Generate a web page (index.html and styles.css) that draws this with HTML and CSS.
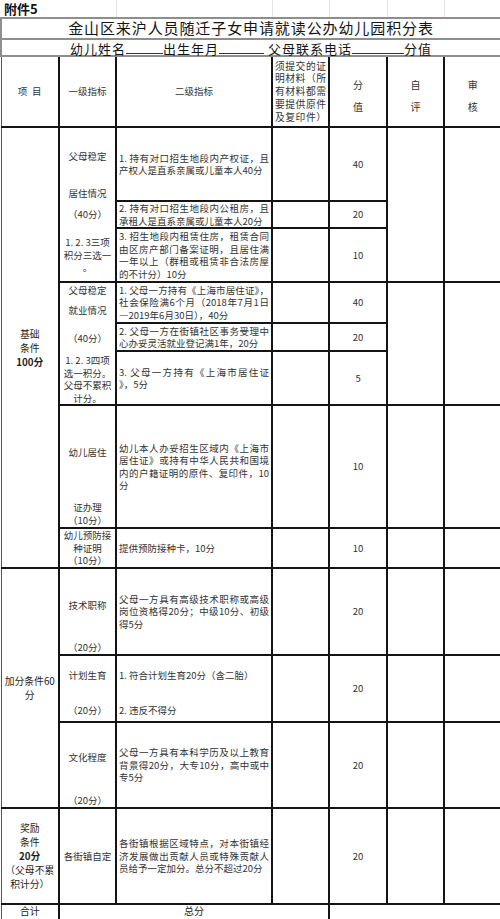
FILE: index.html
```html
<!DOCTYPE html>
<html lang="zh-CN">
<head>
<meta charset="utf-8">
<title>金山区来沪人员随迁子女申请就读公办幼儿园积分表</title>
<link rel="stylesheet" href="styles.css">
</head>
<body>
<table class="sheet">
  <colgroup>
    <col class="c1"><col class="c2"><col class="c3"><col class="c4"><col class="c5"><col class="c6"><col class="c7">
  </colgroup>
  <tr class="r-top">
    <td colspan="2" class="att">附件5</td><td></td><td></td><td></td><td></td><td class="last"></td>
  </tr>
  <tr class="r-title">
    <td colspan="7" class="title">金山区来沪人员随迁子女申请就读公办幼儿园积分表</td>
  </tr>
  <tr class="r-info">
    <td colspan="7" class="info">幼儿姓名<span class="blank b1"></span>出生年月<span class="blank b2"></span> 父母联系电话<span class="blank b3"></span>分值</td>
  </tr>
  <tr class="h71">
    <td class="first">项&ensp;目</td>
    <td>一级指标</td>
    <td>二级指标</td>
    <td class="doc"><div class="j">须提交的证</div><div class="j">明材料（所</div><div class="j">有材料都需</div><div class="j">要提供原件</div><div class="j">及复印件）</div></td>
    <td class="two">分<br>值</td>
    <td class="two">自<br>评</td>
    <td class="two last">审<br>核</td>
  </tr>

  <tr class="h74">
    <td rowspan="8" class="first sec"><div>基础</div><div>条件</div><div class="bold">100分</div></td>
    <td rowspan="3" class="stack pt22">
      <div>父母稳定</div>
      <div class="mt24">居住情况</div>
      <div class="mt8">（40分）</div>
      <div class="mt15">1. 2. 3三项</div>
      <div>积分三选一</div>
      <div>。</div>
    </td>
    <td class="txt"><div class="j">1. 持有对口招生地段内产权证，且</div><div>产权人是直系亲属或儿童本人40分</div></td>
    <td></td>
    <td>40</td>
    <td rowspan="3"></td>
    <td rowspan="3" class="last"></td>
  </tr>
  <tr class="h26">
    <td class="txt"><div class="j">2. 持有对口招生地段内公租房，且</div><div>承租人是直系亲属或儿童本人20分</div></td>
    <td></td>
    <td>20</td>
  </tr>
  <tr class="h54">
    <td class="txt"><div class="j">3. 招生地段内租赁住房，租赁合同</div><div class="j">由区房产部门备案证明，且居住满</div><div class="j">一年以上（群租或租赁非合法房屋</div><div>的不计分）10分</div></td>
    <td></td>
    <td>10</td>
  </tr>

  <tr class="h41">
    <td rowspan="3" class="stack pt1">
      <div>父母稳定</div>
      <div class="mt7">就业情况</div>
      <div class="mt15">（40分）</div>
      <div class="mt9">1. 2. 3四项</div>
      <div>选一积分。</div>
      <div>父母不累积</div>
      <div>计分。</div>
    </td>
    <td class="txt"><div class="j">1. 父母一方持有《上海市居住证》，</div><div class="j">社会保险满6个月（2018年7月1日</div><div>—2019年6月30日），40分</div></td>
    <td></td>
    <td>40</td>
    <td rowspan="3"></td>
    <td rowspan="3" class="last"></td>
  </tr>
  <tr class="h28">
    <td class="txt"><div class="j">2. 父母一方在街镇社区事务受理中</div><div>心办妥灵活就业登记满1年，20分</div></td>
    <td></td>
    <td>20</td>
  </tr>
  <tr class="h54">
    <td class="txt"><div class="j">3. 父母一方持有《上海市居住证</div><div>》，5分</div></td>
    <td></td>
    <td>5</td>
  </tr>

  <tr class="h123">
    <td class="stack pt40">
      <div>幼儿居住</div>
      <div class="mt42">证办理</div>
      <div>（10分）</div>
    </td>
    <td class="txt"><div class="j">幼儿本人办妥招生区域内《上海市</div><div class="j">居住证》或持有中华人民共和国境</div><div class="j">内的户籍证明的原件、复印件，10</div><div>分</div></td>
    <td></td>
    <td>10</td>
    <td></td>
    <td class="last"></td>
  </tr>
  <tr class="h40">
    <td><div>幼儿预防接</div><div>种证明</div><div>（10分）</div></td>
    <td class="txt">提供预防接种卡，10分</td>
    <td></td>
    <td>10</td>
    <td></td>
    <td class="last"></td>
  </tr>

  <tr class="h87">
    <td rowspan="3" class="first sec"><div>加分条件60</div><div>分</div></td>
    <td class="stack pt30">
      <div>技术职称</div>
      <div class="mt29">（20分）</div>
    </td>
    <td class="txt"><div class="j">父母一方具有高级技术职称或高级</div><div class="j">岗位资格得20分；中级10分、初级</div><div>得5分</div></td>
    <td></td>
    <td>20</td>
    <td></td>
    <td class="last"></td>
  </tr>
  <tr class="h67">
    <td class="stack pt13">
      <div>计划生育</div>
      <div class="mt22">（20分）</div>
    </td>
    <td class="txt stack pt13">
      <div>1. 符合计划生育20分（含二胎）</div>
      <div class="mt22">2. 违反不得分</div>
    </td>
    <td></td>
    <td>20</td>
    <td></td>
    <td class="last"></td>
  </tr>
  <tr class="h86">
    <td class="stack pt28">
      <div>文化程度</div>
      <div class="mt30">（20分）</div>
    </td>
    <td class="txt"><div class="j">父母一方具有本科学历及以上教育</div><div class="j">背景得20分，大专10分，高中或中</div><div>专5分</div></td>
    <td></td>
    <td>20</td>
    <td></td>
    <td class="last"></td>
  </tr>

  <tr class="h96">
    <td class="first sec"><div>奖励</div><div>条件</div><div class="bold">20分</div><div>（父母不累</div><div>积计分）</div></td>
    <td>各街镇自定</td>
    <td class="txt"><div class="j">各街镇根据区域特点，对本街镇经</div><div class="j">济发展做出贡献人员或特殊贡献人</div><div>员给予一定加分。总分不超过20分</div></td>
    <td></td>
    <td>20</td>
    <td></td>
    <td class="last"></td>
  </tr>

  <tr class="h16 r-total">
    <td class="first">合计</td>
    <td colspan="3">总分</td>
    <td colspan="3" class="last"></td>
  </tr>
</table>
</body>
</html>
```

FILE: styles.css
```css
html, body {
  margin: 0;
  padding: 0;
  background: #ffffff;
  overflow: hidden;
}

body {
  font-family: "Noto Sans CJK SC", "Noto Sans", "Liberation Sans", sans-serif;
  color: #333333;
}

.sheet {
  width: 500px;
  table-layout: fixed;
  border-collapse: collapse;
}

.c1 { width: 58px; }
.c2 { width: 57px; }
.c3 { width: 156px; }
.c4 { width: 57px; }
.c5 { width: 58px; }
.c6 { width: 57px; }
.c7 { width: 57px; }

td {
  padding: 0 2px;
  font-size: 9.5px;
  line-height: 12.5px;
  border: 2px solid #141414;
  text-align: center;
  vertical-align: middle;
}

td.first { border-left: 1px solid #555555; }
td.last { border-right: 1px solid #555555; }

/* top spreadsheet row */
.r-top { height: 18px; }
.r-top td {
  border: none;
  border-right: 1px solid #e4e4e4;
}
.r-top td.att {
  text-align: left;
  vertical-align: bottom;
  font-size: 13px;
  line-height: 15px;
  font-weight: 700;
  color: #111111;
  padding: 0 0 1px 3px;
}

/* title rows */
.r-title { height: 21px; }
.r-info { height: 17px; }
.r-title td, .r-info td {
  border: 2px solid #8e8e8e;
  color: #141414;
  padding: 0;
  white-space: nowrap;
}
.title {
  font-size: 15px;
  line-height: 18px;
  letter-spacing: 0.9px;
  vertical-align: top;
}
.info {
  font-size: 13px;
  line-height: 13px;
  letter-spacing: 1px;
  vertical-align: bottom;
}
.blank {
  display: inline-block;
  height: 0;
  border-bottom: 1px solid #333333;
  vertical-align: baseline;
}
.b1 { width: 37px; }
.b2 { width: 45px; }
.b3 { width: 52px; }

/* header */
.doc {
  text-align: left;
  line-height: 12.7px;
  font-size: 9.8px;
}
.two {
  line-height: 22px;
  padding-top: 9px;
  font-size: 10px;
}

/* body text */
.txt {
  text-align: left;
  padding: 0 2px 0 2px;
}
.j {
  text-align: justify;
  text-align-last: justify;
}
.sec {
  font-size: 9.8px;
  line-height: 14px;
  color: #1e1e1e;
  padding: 0;
  white-space: nowrap;
}
.bold { font-weight: 700; }

.stack { vertical-align: top; }
.pt1 { padding-top: 1px; }
.pt13 { padding-top: 13px; }
.pt22 { padding-top: 22px; }
.pt28 { padding-top: 28px; }
.pt30 { padding-top: 30px; }
.pt40 { padding-top: 40px; }

.mt7 { margin-top: 7.5px; }
.mt8 { margin-top: 8.5px; }
.mt9 { margin-top: 9.5px; }
.mt15 { margin-top: 15.5px; }
.mt22 { margin-top: 22.5px; }
.mt24 { margin-top: 24.5px; }
.mt29 { margin-top: 29px; }
.mt30 { margin-top: 30.5px; }
.mt42 { margin-top: 42.5px; }

/* row heights */
.h16 { height: 16px; }
.h26 { height: 26px; }
.h28 { height: 28px; }
.h40 { height: 40px; }
.h41 { height: 41px; }
.h54 { height: 54px; }
.h67 { height: 67px; }
.h71 { height: 71px; }
.h74 { height: 74px; }
.h86 { height: 86px; }
.h87 { height: 87px; }
.h96 { height: 96px; }
.h123 { height: 123px; }

.r-total td {
  font-size: 10px;
  line-height: 12px;
  vertical-align: top;
  padding-top: 0;
  color: #222222;
}
```
